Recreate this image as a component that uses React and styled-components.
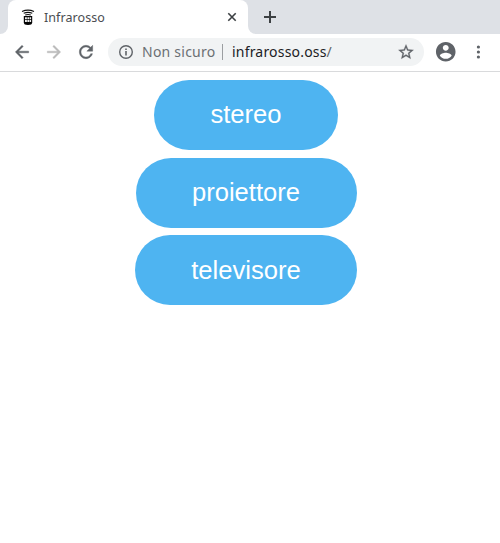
import React from "react";
import styled, { createGlobalStyle } from "styled-components";

const GlobalStyle = createGlobalStyle`
  * { box-sizing: border-box; }
  body { margin: 0; background: #fff; overflow: hidden; }
`;

const Browser = styled.div`
  display: flex;
  flex-direction: column;
  width: 500px;
  height: 543px;
  background: #fff;
  font-family: "Noto Sans", sans-serif;
`;

const TabStrip = styled.div`
  display: flex;
  height: 34px;
  background: #fff;
`;

const StripStart = styled.div`
  width: 8px;
  background: #dee1e6;
  border-bottom-right-radius: 8px;
`;

const TabSlot = styled.div`
  width: 240px;
  background: #dee1e6;
`;

const Tab = styled.div`
  display: flex;
  align-items: center;
  height: 34px;
  padding: 0 10px 0 12px;
  background: #fff;
  border-radius: 8px 8px 0 0;
`;

const TabTitle = styled.span`
  flex: 1;
  margin-left: 8px;
  padding-top: 1px;
  font-size: 12.5px;
  letter-spacing: 0.07px;
  line-height: 16px;
  color: #4a4d51;
`;

const StripRest = styled.div`
  flex: 1;
  display: flex;
  align-items: center;
  padding-left: 15px;
  background: #dee1e6;
  border-bottom-left-radius: 8px;
`;

const Toolbar = styled.div`
  display: flex;
  align-items: center;
  height: 38px;
  padding: 0 6px 1px;
  border-bottom: 1px solid #d9dadc;
`;

const ToolButton = styled.button`
  display: flex;
  align-items: center;
  justify-content: center;
  flex: none;
  width: 32px;
  height: 28px;
  padding: 0;
  border: 0;
  background: none;
`;

const AddressBar = styled.div`
  display: flex;
  align-items: center;
  flex: none;
  width: 316px;
  height: 28px;
  margin: 0 6px;
  padding: 0 9px 0 10px;
  border-radius: 14px;
  background: #f1f3f4;
  font-size: 14px;
  line-height: 20px;
  color: #5f6368;
`;

const Security = styled.span`
  width: 80px;
  margin-left: 8px;
  letter-spacing: 0.24px;
  white-space: nowrap;
  color: #6b6f73;
`;

const Divider = styled.span`
  width: 1px;
  height: 16px;
  margin-right: 9px;
  background: #9b9ea1;
`;

const Address = styled.span`
  flex: 1;
  letter-spacing: 0.19px;
`;

const Host = styled.span`
  color: #202124;
`;

const Glyph = styled.svg`
  display: block;
  flex: none;
  width: ${(p) => p.$size}px;
  height: ${(p) => p.$size}px;
  fill: ${(p) => p.$color || "#5f6368"};
`;

const RemoteIcon = styled.svg`
  display: block;
  width: 16px;
  height: 16px;
`;

const Page = styled.main`
  display: flex;
  flex-direction: column;
  align-items: center;
  flex: 1;
  padding: 8px 8px 0 0;
`;

const DeviceButton = styled.button`
  width: ${(p) => p.$width}px;
  height: 70px;
  margin: 0 0 ${(p) => p.$gap || 0}px;
  padding: 0 0 ${(p) => p.$lift}px;
  border: 0;
  border-radius: 35px;
  background: #4eb4f1;
  color: #fff;
  font-family: "Liberation Sans", Arial, sans-serif;
  font-size: 25.6px;
  line-height: 30px;
`;

const devices = [
  { name: "stereo", width: 184, gap: 8, lift: 2 },
  { name: "proiettore", width: 221, gap: 7, lift: 2 },
  { name: "televisore", width: 222, gap: 0, lift: 0 },
];

const paths = {
  back: "M20 11H7.83l5.59-5.59L12 4l-8 8 8 8 1.41-1.41L7.83 13H20v-2z",
  forward: "M12 4l-1.41 1.41L16.17 11H4v2h12.17l-5.58 5.59L12 20l8-8z",
  reload:
    "M17.65 6.35C16.2 4.9 14.21 4 12 4c-4.42 0-7.99 3.58-7.99 8s3.57 8 7.99 8c3.73 0 6.84-2.55 7.73-6h-2.08c-.82 2.33-3.04 4-5.65 4-3.31 0-6-2.69-6-6s2.69-6 6-6c1.66 0 3.14.69 4.22 1.78L13 11h7V4l-2.35 2.35z",
  star: "M22 9.24l-7.19-.62L12 2 9.19 8.63 2 9.24l5.46 4.73L5.82 21 12 17.27 18.18 21l-1.63-7.03L22 9.24zM12 15.4l-3.76 2.27 1-4.28-3.32-2.88 4.38-.38L12 6.1l1.71 4.04 4.38.38-3.32 2.88 1 4.28L12 15.4z",
  account:
    "M12 2C6.48 2 2 6.48 2 12s4.48 10 10 10 10-4.48 10-10S17.52 2 12 2zm0 3c1.66 0 3 1.34 3 3s-1.34 3-3 3-3-1.34-3-3 1.34-3 3-3zm0 14.2c-2.5 0-4.71-1.28-6-3.22.03-1.99 4-3.08 6-3.08 1.99 0 5.97 1.09 6 3.08-1.29 1.94-3.5 3.22-6 3.22z",
};

function Icon({ name, size, color, outline = 0 }) {
  return (
    <Glyph viewBox="0 0 24 24" $size={size} $color={color} aria-hidden="true">
      <path d={paths[name]} stroke={color || "#5f6368"} strokeWidth={outline} />
    </Glyph>
  );
}

function InfoIcon() {
  return (
    <Glyph viewBox="0 0 16 16" $size={16} aria-hidden="true">
      <circle cx="8" cy="8" r="6.3" fill="none" stroke="#5f6368" strokeWidth="1.4" />
      <path d="M7.2 4.4h1.6V6H7.2zM7.2 7.1h1.6v4.5H7.2z" />
    </Glyph>
  );
}

function Favicon() {
  return (
    <RemoteIcon viewBox="0 0 16 16" fill="none" stroke="#111">
      <path d="M2 2.4Q8-.2 14 2.4M3.7 4.2Q8 2.6 12.3 4.2M5.2 6Q8 5 10.8 6" strokeWidth="1.1" />
      <path d="M3.8 7h8.4v6.5Q12.2 16 8 16T3.8 13.5z" fill="#050505" stroke="none" />
      <path
        d="M5 8.3h1.9v1.9H5zM7.4 8.3H9v1.9H7.4zM9.5 8.3h1.6v1.9H9.5zM5 11h1.9v1.9H5zM7.4 11H9v1.9H7.4zM9.5 11h1.6v1.9H9.5z"
        fill="#eee"
        stroke="none"
      />
    </RemoteIcon>
  );
}

export default function App() {
  return (
    <Browser>
      <GlobalStyle />
      <TabStrip>
        <StripStart />
        <TabSlot>
          <Tab>
            <Favicon />
            <TabTitle>Infrarosso</TabTitle>
            <Glyph viewBox="0 0 12 12" $size={12}>
              <path d="M2.3 2.3l7.4 7.4M9.7 2.3L2.3 9.7" stroke="#3c4043" strokeWidth="1.6" />
            </Glyph>
          </Tab>
        </TabSlot>
        <StripRest>
          <Glyph viewBox="0 0 14 14" $size={14}>
            <path d="M7 1v12M1 7h12" stroke="#3c4043" strokeWidth="2" />
          </Glyph>
        </StripRest>
      </TabStrip>
      <Toolbar>
        <ToolButton><Icon name="back" size={20} outline={0.5} /></ToolButton>
        <ToolButton><Icon name="forward" size={20} color="#bababa" outline={0.5} /></ToolButton>
        <ToolButton><Icon name="reload" size={20} outline={0.5} /></ToolButton>
        <AddressBar>
          <InfoIcon />
          <Security>Non sicuro</Security>
          <Divider />
          <Address><Host>infrarosso.oss</Host>/</Address>
          <Icon name="star" size={18} outline={0.4} />
        </AddressBar>
        <ToolButton><Icon name="account" size={23.5} /></ToolButton>
        <ToolButton>
          <Glyph viewBox="0 0 16 16" $size={16}>
            <circle cx="8.4" cy="3" r="1.6" />
            <circle cx="8.4" cy="8" r="1.6" />
            <circle cx="8.4" cy="13" r="1.6" />
          </Glyph>
        </ToolButton>
      </Toolbar>
      <Page>
        {devices.map((device) => (
          <DeviceButton key={device.name} $width={device.width} $gap={device.gap} $lift={device.lift}>
            {device.name}
          </DeviceButton>
        ))}
      </Page>
    </Browser>
  );
}
